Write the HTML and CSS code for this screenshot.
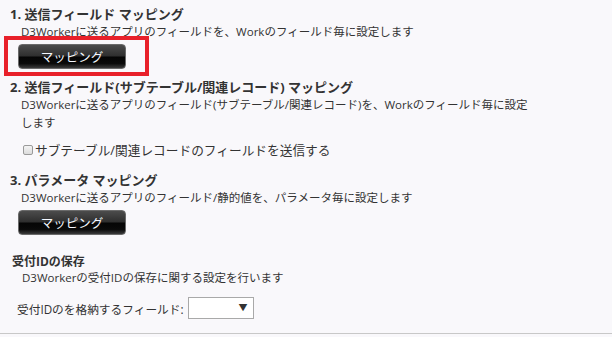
FILE: index.html
```
<!DOCTYPE html>
<html lang="ja">

<head>
    <meta charset="utf-8" />
    <title>D3Worker 設定</title>
    <link rel="stylesheet" href="styles.css">
</head>

<body>
  <div class="settings">

    <div class="section">
      <h3 class="title">1. 送信フィールド マッピング</h3>
      <p class="desc">D3Workerに送るアプリのフィールドを、Workのフィールド毎に設定します</p>
      <div class="btnRow">
        <span class="marked">
          <button class="mapBtn">マッピング</button>
        </span>
      </div>
    </div>

    <div class="section">
      <h3 class="title">2. 送信フィールド(サブテーブル/関連レコード) マッピング</h3>
      <p class="desc">D3Workerに送るアプリのフィールド(サブテーブル/関連レコード)を、Workのフィールド毎に設定します</p>
      <label class="check"><input type="checkbox">サブテーブル/関連レコードのフィールドを送信する</label>
    </div>

    <div class="section">
      <h3 class="title">3. パラメータ マッピング</h3>
      <p class="desc">D3Workerに送るアプリのフィールド/静的値を、パラメータ毎に設定します</p>
      <div class="btnRow">
        <button class="mapBtn">マッピング</button>
      </div>
    </div>

    <div class="section receipt">
      <h4 class="subTitle">受付IDの保存</h4>
      <p class="desc small">D3Workerの受付IDの保存に関する設定を行います</p>
      <div class="fieldRow">
        <span>受付IDのを格納するフィールド:</span>
        <span class="select"><span class="arrow">&#9660;</span></span>
      </div>
    </div>

  </div>
</body>

</html>
```

FILE: styles.css
```
/*
  colors:
    page bg   #f9f8fb
    text      #333333
    marker    #e8202a
 */
body {
  margin: 0;
  background-color: #f9f8fb;
  color: #333333;
  font-family: "Open Sans", "Noto Sans CJK JP", sans-serif;
}

div.settings {
  padding: 6px 10px 0 10px;
  border-bottom: 1px solid #c8c8c8;
  height: 334px;
  box-sizing: border-box;
}

h3.title {
  margin: 0;
  font-size: 13px;
  line-height: 16px;
  font-weight: bold;
}

p.desc {
  max-width: 514px;
  margin: 1px 0 0 11px;
  font-size: 11.5px;
  line-height: 18px;
}

div.btnRow {
  padding-left: 8px;
  margin-top: 3px;
  height: 25px;
}

span.marked {
  position: relative;
  display: inline-block;
}

span.marked::after {
  content: "";
  position: absolute;
  left: -14px;
  top: -8px;
  right: -23px;
  bottom: -7px;
  border: 4px solid #e8202a;
}

button.mapBtn {
  width: 108px;
  height: 25px;
  padding: 0;
  border: 1px solid #6a6a6a;
  border-radius: 4px;
  background: linear-gradient(#4c4c4c, #2e2e2e 48%, #050505 52%, #0a0a0a 80%, #3a3a3a);
  color: #f4f8ff;
  font-family: inherit;
  font-size: 12.5px;
  font-weight: normal;
}

div.section {
  margin-bottom: 10px;
}

label.check {
  display: flex;
  align-items: center;
  margin: 9px 0 13px 13px;
  font-size: 12.7px;
  line-height: 18px;
}

label.check input {
  appearance: none;
  width: 10px;
  height: 10px;
  margin: 0 2px 0 0;
  border: 1px solid #9a9a9a;
  border-radius: 2px;
  background: linear-gradient(#f4f4f4, #dcdcdc);
}

div.section.receipt {
  margin-top: 19px;
  padding-left: 2px;
}

h4.subTitle {
  margin: 0;
  font-size: 12px;
  line-height: 15px;
  font-weight: bold;
}

p.desc.small {
  margin: 0 0 0 10px;
}

div.fieldRow {
  display: flex;
  align-items: center;
  gap: 4px;
  margin: 10px 0 0 5px;
  font-size: 11.7px;
}

span.select {
  position: relative;
  display: inline-block;
  width: 64px;
  height: 20px;
  border: 1px solid #a9a9a9;
  background: #ffffff;
}

span.arrow {
  position: absolute;
  right: 5px;
  top: 3px;
  font-size: 9px;
  color: #333333;
}
```
